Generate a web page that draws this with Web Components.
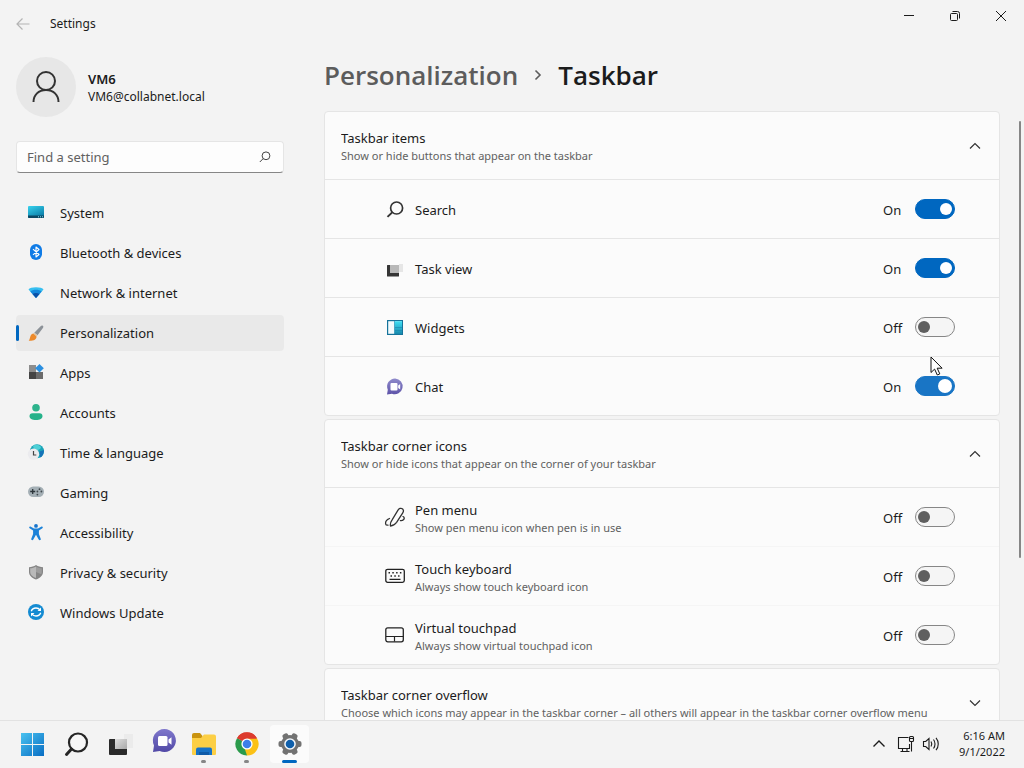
<!DOCTYPE html>
<html lang="en">
<head>
<meta charset="utf-8">
<title>Settings</title>
<style>
  html, body { height: 100%; }
  body {
    margin: 0;
    display: flex;
    flex-direction: column;
    overflow: hidden;
    background: #f3f3f3;
    color: #1b1b1b;
    font: 13px/20px "Noto Sans", "Open Sans", sans-serif;
    --accent: #0067c0;
    --muted: #616161;
    --line: #e5e5e5;
    --small: 11px;
    --medium: 12px;
  }
</style>
</head>
<body>

<settings-window caption="Settings">
  <user-card slot="side" name="VM6" mail="VM6@collabnet.local"></user-card>
  <search-box slot="side" hint="Find a setting"></search-box>
  <side-nav slot="side">
    <nav-item icon="system">System</nav-item>
    <nav-item icon="bluetooth">Bluetooth &amp; devices</nav-item>
    <nav-item icon="network">Network &amp; internet</nav-item>
    <nav-item icon="brush" active>Personalization</nav-item>
    <nav-item icon="apps">Apps</nav-item>
    <nav-item icon="account">Accounts</nav-item>
    <nav-item icon="clock">Time &amp; language</nav-item>
    <nav-item icon="gamepad">Gaming</nav-item>
    <nav-item icon="access">Accessibility</nav-item>
    <nav-item icon="shield">Privacy &amp; security</nav-item>
    <nav-item icon="update">Windows Update</nav-item>
  </side-nav>

  <page-title parent="Personalization" current="Taskbar"></page-title>
  <setting-group label="Taskbar items" describe="Show or hide buttons that appear on the taskbar" open>
    <setting-row icon="search" label="Search" on></setting-row>
    <setting-row icon="taskview" label="Task view" on></setting-row>
    <setting-row icon="widgets" label="Widgets"></setting-row>
    <setting-row icon="chat" label="Chat" on hot></setting-row>
  </setting-group>
  <setting-group label="Taskbar corner icons" describe="Show or hide icons that appear on the corner of your taskbar" open>
    <setting-row icon="pen" label="Pen menu" describe="Show pen menu icon when pen is in use"></setting-row>
    <setting-row icon="keyboard" label="Touch keyboard" describe="Always show touch keyboard icon" soft></setting-row>
    <setting-row icon="touchpad" label="Virtual touchpad" describe="Always show virtual touchpad icon" soft></setting-row>
  </setting-group>
  <setting-group label="Taskbar corner overflow" describe="Choose which icons may appear in the taskbar corner – all others will appear in the taskbar corner overflow menu"></setting-group>
</settings-window>

<task-bar time="6:16 AM" date="9/1/2022">
  <task-button icon="start" label="Start"></task-button>
  <task-button icon="bigsearch" label="Search"></task-button>
  <task-button icon="bigtask" label="Task view"></task-button>
  <task-button icon="bigchat" label="Chat"></task-button>
  <task-button icon="folder" label="File Explorer" running></task-button>
  <task-button icon="chrome" label="Chrome" running></task-button>
  <task-button icon="gear" label="Settings" running active></task-button>
</task-bar>

<mouse-pointer></mouse-pointer>

<script>
// [width, height, markup]
const ICONS = {
  back: [14, 14, '<path d="M13.500 7H1M6.500 1.500L1 7l5.500 5.500" fill="none" stroke="#b4b4b4" stroke-width="1.200"/>'],
  min: [12, 12, '<path d="M1 5.500h10" stroke="#1b1b1b"/>'],
  restore: [12, 12, '<rect x="1.500" y="3.500" width="7" height="7" rx="1" fill="none" stroke="#1b1b1b"/><path d="M3.500 1.500h5a2 2 0 0 1 2 2v5" fill="none" stroke="#1b1b1b"/>'],
  close: [12, 12, '<path d="M1 1l10 10M11 1L1 11" stroke="#1b1b1b" fill="none"/>'],
  user: [32, 34, '<g fill="none" stroke="#333" stroke-width="2"><circle cx="16" cy="11" r="9"/><path d="M3.500 32c0-7 5-12 12.500-12s12.500 5 12.500 12"/></g>'],
  find: [12, 12, '<g fill="none" stroke="#444"><circle cx="7" cy="4.800" r="3.900"/><path d="M4.200 7.600L.8 11"/></g>'],
  up: [12, 8, '<path d="M1 6.500L6 1.500l5 5" fill="none" stroke="#333" stroke-width="1.200"/>'],
  down: [12, 8, '<path d="M1 1.500l5 5 5-5" fill="none" stroke="#333" stroke-width="1.200"/>'],
  crumb: [8, 12, '<path d="M1.500 1.500L6 6l-4.500 4.500" fill="none" stroke="#5c5c5c" stroke-width="1.600"/>'],

  system: [16, 16, '<defs><linearGradient id="g" x2=".6" y2="1"><stop stop-color="#38d3ee"/><stop offset="1" stop-color="#0a7da8"/></linearGradient></defs><rect y="1" width="16" height="12" rx="1" fill="url(#g)"/><path d="M0 10.500h16V12a1 1 0 0 1-1 1H1a1 1 0 0 1-1-1z" fill="#0b4763"/><path d="M10 11.800h1M12 11.800h1M14 11.800h1" stroke="#7fe3f5"/>'],
  bluetooth: [16, 16, '<rect x="2" y="-1" width="12" height="16" rx="6" fill="#0f7be6"/><path d="M5 4.200l6 5.300L8 12V2l3 2.500-6 5.300" fill="none" stroke="#fff" stroke-width="1.100" stroke-linejoin="round"/>'],
  network: [16, 16, '<path d="M.5 4.500C2 1.500 14 1.500 15.500 4.500L8 13z" fill="#37bff0"/><path d="M2.300 6.500C5 4 11 4 13.700 6.500L8 13z" fill="#1488dc"/><path d="M4.500 9C6.500 7.500 9.500 7.500 11.500 9L8 13z" fill="#0b4fa6"/>'],
  brush: [16, 16, '<path d="M14.800.7c.8.500.7 1.300.1 2.200L9.500 10.300 6.300 7.700 12.600 1.200c.7-.7 1.500-.9 2.200-.5z" fill="#8c9298"/><path d="M6.300 7.700l3.200 2.600-1 1.200-3.300-2.700z" fill="#dfc6a4"/><path d="M5.200 8.600l3.300 2.800c.2 2.800-2.500 4.600-7.800 4.400C2.500 14.500 1.500 9.500 5.200 8.600z" fill="#ec8a2c"/>'],
  apps: [16, 16, '<path d="M1 0h7v7H1z" fill="#8d8d8d"/><path d="M1 7h7v7H1z" fill="#444"/><path d="M8 7h7v7H8z" fill="#6b6b6b"/><path d="M11.500-1L15.800 3.300 11.500 7.600 7.200 3.300z" fill="#2b8fe0"/>'],
  account: [16, 16, '<circle cx="8" cy="2.800" r="3.800" fill="#2db38c"/><path d="M1.500 11.200a3 3 0 0 1 3-3h7a3 3 0 0 1 3 3c0 2.200-2.500 3.800-6.500 3.800s-6.500-1.600-6.500-3.800z" fill="#25b28a"/>'],
  clock: [16, 16, '<circle cx="9" cy="6.200" r="7" fill="#1aa5b8"/><path d="M5 1C8-1.500 12 0 13 2c0 2-2 2-3 3s-3 1-4-1z" fill="#4fd0d6"/><path d="M11.500 6.500L16 5c0 3.500-1.500 6.500-4 7.500z" fill="#1673b8"/><circle cx="5.500" cy="9.300" r="5.700" fill="#ebebee"/><path d="M5.500 6v4h2.800" fill="none" stroke="#444" stroke-width="1.200"/>'],
  gamepad: [16, 16, '<rect y="1.500" width="16" height="10.500" rx="5.200" fill="#a4afb5"/><path d="M4.700 4v5M2.200 6.500h5" stroke="#2c3439" stroke-width="1.300"/><g fill="#3f484d"><circle cx="11.500" cy="4.200" r=".9"/><circle cx="9.400" cy="6.500" r=".9"/><circle cx="13.400" cy="6.500" r=".9"/><circle cx="9.400" cy="9.600" r=".9"/></g>'],
  access: [16, 16, '<circle cx="8" cy=".9" r="1.900" fill="#1674cc"/><path d="M2.400 1.600L6 3.500h4l3.600-1.900c1.200-.2 1.600 1 .8 1.600L10.900 5.400V9l1.900 5c.2 1.200-1.500 1.700-2.100.6L8 9.800l-2.700 4.800c-.6 1.100-2.300.6-2.100-.6L5.100 9V5.400L1.600 3.200c-.8-.6-.4-1.800.8-1.600z" fill="#1c82d8"/>'],
  shield: [16, 16, '<path d="M8 0C10 1.400 12.500 2.200 15 2.200V7c0 3.500-3 6-7 7.500C4 13 1 10.500 1 7V2.200C3.500 2.200 6 1.400 8 0z" fill="#858585"/><path d="M8 1.400c1.800 1.200 3.800 1.800 5.800 1.900V7c0 .8-.2 1.600-.6 2.300L8 7z" fill="#9c9c9c"/><path d="M8 1.400v11.700C4.500 11.800 2.200 9.700 2.200 7V3.300C4.300 3.200 6.200 2.600 8 1.400z" fill="#b9b9b9"/>'],
  update: [16, 16, '<circle cx="8" cy="7" r="8" fill="#148bd2"/><g fill="none" stroke="#fff" stroke-width="1.400"><path d="M3.300 6.200C4 4 5.800 3 8 3c1.800 0 3.200.8 4.200 2.200"/><path d="M12.700 7.800C12 10 10.200 11 8 11c-1.800 0-3.200-.8-4.200-2.200"/></g><path d="M13 2.500V6H9.500zM3 11.500V8h3.500z" fill="#fff"/>'],

  search: [20, 20, '<g fill="none" stroke="#333" stroke-width="1.700"><circle cx="11.600" cy="9" r="6"/><path d="M7.200 13.400L2.500 17.900" stroke-width="2"/></g>'],
  taskview: [20, 20, '<path d="M14 6h4v8h-4z" fill="#e6e6e6"/><rect x="2" y="7" width="12" height="11.500" rx=".5" fill="#353535"/><path d="M5 7h9v8H5z" fill="#b8b8b8"/>'],
  widgets: [20, 20, '<defs><linearGradient id="g" x2="0" y2="1"><stop stop-color="#3fe0f4"/><stop offset="1" stop-color="#1789ad"/></linearGradient></defs><rect x="2.600" y="3.600" width="14.800" height="13.800" fill="#f2fbfd" stroke="#15739b" stroke-width="1.200"/><path d="M9.500 4.200H17v12.700H9.500z" fill="url(#g)"/><path d="M9.500 4v13M10 10.500h7M10 13.500h7" stroke="#1985ad" stroke-width=".6"/>'],
  chat: [20, 20, '<defs><linearGradient id="g" x2="0" y2="1"><stop stop-color="#8f8bcb"/><stop offset="1" stop-color="#5d52a8"/></linearGradient></defs><path d="M10.200 2.500a7.900 7.900 0 1 1-3.200 15.300L2 18.500l.8-4.800A7.900 7.900 0 0 1 10.200 2.500z" fill="url(#g)"/><rect x="5.500" y="7" width="7" height="7.500" rx="1" fill="#fff"/><path d="M13.200 9.500l2-1.600v5.600l-2-1.600z" fill="#fff"/>'],
  pen: [20, 20, '<g fill="none" stroke="#333" stroke-width="1.300" stroke-linecap="round" stroke-linejoin="round"><path d="M5.500 19c-.5-2 .3-4.300 1.600-6.200L13 3.200C14 1.500 16 .8 17.300 1.700s1.400 2.700.3 4.400l-6 9.200c-1.500 2-3.500 3.500-6.100 3.700z"/><path d="M4.500 11.500C2 12.500.3 14.800.6 16.800c.2 1 1.200 1.500 2.400 1.400"/><path d="M18 9.500c1.500.8 1.700 2 .4 3.300-.8.800-1.800 1-3 .8"/></g>'],
  keyboard: [20, 20, '<rect x=".8" y="3.300" width="18.500" height="13" rx="1.800" fill="none" stroke="#222" stroke-width="1.300"/><path d="M3.500 6.700h13M5.500 10h9" stroke="#222" stroke-width="1.500" stroke-dasharray="1.500 2.300"/><path d="M4.500 13.300h11" stroke="#222" stroke-width="1.200"/>'],
  touchpad: [20, 20, '<rect x=".8" y="2.800" width="17.500" height="14" rx="2" fill="none" stroke="#222" stroke-width="1.300"/><path d="M1 11.500h17.500M9.500 11.500v5" fill="none" stroke="#222" stroke-width="1.200"/>'],

  start: [28, 28, '<defs><linearGradient id="g" gradientUnits="userSpaceOnUse" x1="2" y1="2" x2="25" y2="26"><stop stop-color="#4cc6f2"/><stop offset="1" stop-color="#0a6fc4"/></linearGradient></defs><path d="M3 3h11v11H3zM15 3h11v11H15zM3 15h11v11H3zM15 15h11v11H15z" fill="url(#g)"/>'],
  bigsearch: [28, 28, '<circle cx="17" cy="12.500" r="9" fill="#f7f7f7" stroke="#262626" stroke-width="2.200"/><path d="M10.500 19L5.500 24.500" stroke="#262626" stroke-width="3" stroke-linecap="round"/>'],
  bigtask: [28, 28, '<defs><linearGradient id="g" x2="1" y2="1"><stop stop-color="#dedede"/><stop offset="1" stop-color="#a9a9a9"/></linearGradient></defs><path d="M20 4h9v14h-9z" fill="#ebebeb"/><rect x="5" y="9" width="18" height="16" rx="1" fill="#2a2a2a"/><path d="M11 9h12v10H11z" fill="url(#g)"/>'],
  bigchat: [28, 28, '<defs><linearGradient id="g" x2="0" y2="1"><stop stop-color="#8078cc"/><stop offset="1" stop-color="#5149a6"/></linearGradient></defs><path d="M17.500-1a11.500 11.500 0 1 1-4.800 22L6 22l1-6.500A11.500 11.500 0 0 1 17.500-1z" fill="url(#g)"/><rect x="11" y="6" width="9.500" height="10" rx="1.500" fill="#fff"/><path d="M21.500 9.500l3-2.300v7.600l-3-2.300z" fill="#fff"/>'],
  folder: [28, 28, '<path d="M2 5a2 2 0 0 1 2-2h6l2.500 3v5H2z" fill="#c9930f"/><path d="M2 8h9l3-3.500h10a2 2 0 0 1 2 2V24a1 1 0 0 1-1 1H3a1 1 0 0 1-1-1z" fill="#fccf45"/><path d="M6 19.500a2 2 0 0 1 2-2h12a2 2 0 0 1 2 2V25H6z" fill="#1772c6"/><path d="M9 22h10v3H9z" fill="#0f5ba8"/>'],
  chrome: [28, 28, '<path d="M14 14L4 8.300A11.400 11.400 0 0 1 24 8.300z" fill="#dc3b2e"/><path d="M14 14L24 8.300A11.400 11.400 0 0 1 14 25.500z" fill="#fbc116"/><path d="M14 14v11.500A11.400 11.400 0 0 1 4 8.300z" fill="#2a9a4b"/><path d="M14 8.500h10.200l-4.500 8.500z" fill="#fbc116"/><path d="M3.900 8.500l5.300 9 4.800-3.500z" fill="#2a9a4b"/><path d="M14 14h5l-5 11.500-2-6z" fill="#fbc116"/><path d="M4 8.300l5 .2 10 0h5A11.400 11.400 0 0 0 4 8.300z" fill="#dc3b2e"/><circle cx="14" cy="14" r="5.600" fill="#fff"/><circle cx="14" cy="14" r="4.300" fill="#3d7ee8"/>'],
  gear: [28, 28, '<g fill="#727272"><circle cx="14" cy="14" r="9"/><rect x="11" y="2.500" width="6" height="23" rx="2" transform="rotate(30 14 14)"/><rect x="11" y="2.500" width="6" height="23" rx="2" transform="rotate(90 14 14)"/><rect x="11" y="2.500" width="6" height="23" rx="2" transform="rotate(150 14 14)"/></g><circle cx="14" cy="14" r="5.800" fill="#f5f8fb"/><circle cx="14" cy="14" r="4.300" fill="#0f5fab"/>'],
  trayup: [14, 10, '<path d="M1.500 7.500L7 2l5.500 5.500" fill="none" stroke="#1b1b1b" stroke-width="1.400"/>'],
  monitor: [16, 18, '<g fill="none" stroke="#1b1b1b" stroke-width="1.100"><path d="M10.500 2.500H.5v11h11V9M4.500 13.500v3M9 13.500v3M2.500 16.500h9"/><rect x="11.500" y="1.500" width="4" height="5" rx="1"/><path d="M11.500 3.500h4M13.500 6.500v10"/></g>'],
  speaker: [18, 16, '<g fill="none" stroke="#1b1b1b" stroke-width="1.100"><path d="M1.500 5.500h2.200l3.300-3v11l-3.300-3H1.500z"/><path d="M9 5.500c1 1.500 1 3.500 0 5M11.500 3.500c2 2.500 2 6.500 0 9M14 1.800c3 3.500 3 9 0 12.400"/></g>'],
  pointer: [14, 20, '<path d="M1 1v15.500l3.600-3.400L7.300 19l2.500-1.100-2.600-5.700h4.900z" fill="#fff" stroke="#111"/>']
};

const icon = name => {
  const [w, h, body] = ICONS[name];
  return `<svg width="${w}" height="${h}" viewBox="0 0 ${w} ${h}" overflow="visible" aria-hidden="true">${body}</svg>`;
};

// Shared base: every element renders getTemplate() into an open shadow root
class BaseElement extends HTMLElement {
  constructor() {
    super();
    this.attachShadow({ mode: 'open' });
  }

  connectedCallback() {
    const template = document.createElement('template');
    template.innerHTML = `
      <style>
        * { box-sizing: border-box; }
        svg { display: block; flex: none; }
        button { margin: 0; padding: 0; border: 0; background: none; color: inherit; font: inherit; }
        ${this.getStyle()}
      </style>
      ${this.getTemplate()}`;
    this.shadowRoot.replaceChildren(template.content.cloneNode(true));
  }

  attr(name) {
    return this.getAttribute(name) || '';
  }
}

class SettingsWindow extends BaseElement {
  getTemplate() {
    return `
      <header>
        <button class="back" aria-label="Back">${icon('back')}</button>
        <span class="caption">${this.attr('caption')}</span>
        <div class="controls">
          <button aria-label="Minimize">${icon('min')}</button>
          <button aria-label="Restore">${icon('restore')}</button>
          <button aria-label="Close">${icon('close')}</button>
        </div>
      </header>
      <div class="body">
        <aside><slot name="side"></slot></aside>
        <main><slot></slot></main>
        <div class="thumb"></div>
      </div>`;
  }

  getStyle() {
    return `
      :host { flex: 1; min-height: 0; display: flex; flex-direction: column; }
      header { display: flex; align-items: center; height: 48px; flex: none; padding-left: 16px; }
      .back { width: 34px; display: flex; }
      .caption { font-size: var(--medium); }
      .controls { margin-left: auto; align-self: flex-start; display: flex; }
      .controls button { width: 46px; height: 32px; display: grid; place-items: center; }
      .body { flex: 1; min-height: 0; display: flex; gap: 40px; padding: 0 24px 0 16px; position: relative; overflow: hidden; }
      aside { flex: 0 0 268px; padding-top: 9px; }
      main { flex: 1; min-width: 0; display: flex; flex-direction: column; gap: 3px; }
      .thumb { position: absolute; right: 3px; top: 73px; width: 2px; height: 65%; border-radius: 1px; background: #868686; }
    `;
  }
}

class UserCard extends BaseElement {
  getTemplate() {
    return `
      <div class="avatar">${icon('user')}</div>
      <div>
        <div class="name">${this.attr('name')}</div>
        <div class="mail">${this.attr('mail')}</div>
      </div>`;
  }

  getStyle() {
    return `
      :host { display: flex; align-items: center; gap: 12px; }
      .avatar { width: 60px; height: 60px; border-radius: 50%; background: #e7e7e7; display: grid; place-items: center; }
      .name { font-weight: 600; }
      .mail { font-size: var(--medium); line-height: 16px; }
    `;
  }
}

class SearchBox extends BaseElement {
  getTemplate() {
    return `
      <input type="text" id="q" placeholder="${this.attr('hint')}" aria-label="${this.attr('hint')}">
      <label for="q">${icon('find')}</label>`;
  }

  getStyle() {
    return `
      :host { display: flex; align-items: center; height: 32px; margin: 24px 0 22px; padding: 0 12px 0 10px;
        background: #fdfdfd; border: 1px solid var(--line); border-bottom-color: #868686; border-radius: 4px; box-sizing: border-box; }
      input { flex: 1; min-width: 0; border: 0; padding: 0; outline: 0; background: none; font: inherit; color: inherit; }
      input::placeholder { color: var(--muted); opacity: 1; }
    `;
  }
}

class SideNav extends BaseElement {
  getTemplate() {
    return `<nav><slot></slot></nav>`;
  }

  getStyle() {
    return `
      :host { display: block; }
      nav { display: flex; flex-direction: column; gap: 4px; }
    `;
  }
}

class NavItem extends BaseElement {
  getTemplate() {
    return `<a href="#">${icon(this.attr('icon'))}<slot></slot></a>`;
  }

  getStyle() {
    return `
      :host { display: block; }
      a { position: relative; display: flex; align-items: center; gap: 16px; height: 36px; padding-left: 12px;
        border-radius: 4px; color: inherit; text-decoration: none; }
      :host([active]) a { background: #e9e9e9; }
      :host([active]) a::before { content: ""; position: absolute; left: 0; top: 10px; width: 3px; height: 16px;
        border-radius: 2px; background: var(--accent); }
    `;
  }
}

class PageTitle extends BaseElement {
  getTemplate() {
    return `
      <h1><a href="#">${this.attr('parent')}</a>${icon('crumb')}<span>${this.attr('current')}</span></h1>`;
  }

  getStyle() {
    return `
      :host { display: block; }
      h1 { margin: 0; padding: 9px 0 15px; display: flex; align-items: center; gap: 16px;
        font: 600 26px/36px "Open Sans", "Noto Sans", sans-serif; }
      a { color: #5c5c5c; text-decoration: none; }
    `;
  }
}

class SettingGroup extends BaseElement {
  getTemplate() {
    const open = this.hasAttribute('open');
    return `
      <button aria-expanded="${open}">
        <span class="text">
          <span class="label">${this.attr('label')}</span>
          <span class="describe">${this.attr('describe')}</span>
        </span>
        ${icon(open ? 'up' : 'down')}
      </button>
      <slot></slot>`;
  }

  getStyle() {
    return `
      :host { display: block; flex: none; background: #fbfbfb; border: 1px solid var(--line); border-radius: 4px; overflow: hidden; }
      button { display: flex; align-items: center; gap: 14px; width: 100%; height: 67px; padding: 0 18px 0 16px; text-align: left; }
      .text { flex: 1; min-width: 0; }
      .label, .describe { display: block; white-space: nowrap; overflow: hidden; }
      .describe { font-size: var(--small); line-height: 16px; color: var(--muted); }
    `;
  }
}

class SettingRow extends BaseElement {
  getTemplate() {
    const on = this.hasAttribute('on');
    const describe = this.attr('describe');
    return `
      ${icon(this.attr('icon'))}
      <label for="sw">
        <span class="label">${this.attr('label')}</span>
        ${describe ? `<span class="describe">${describe}</span>` : ''}
      </label>
      <span class="state">${on ? 'On' : 'Off'}</span>
      <input type="checkbox" role="switch" id="sw" ${on ? 'checked' : ''}>`;
  }

  getStyle() {
    return `
      :host { display: flex; align-items: center; height: 59px; padding: 0 44px 0 60px; box-sizing: border-box; border-top: 1px solid var(--line); }
      :host([soft]) { border-top-color: #f5f5f5; }
      label { flex: 1; padding: 1px 0 0 10px; }
      .label, .describe { display: block; }
      .describe { font-size: var(--small); line-height: 16px; color: var(--muted); }
      .state { width: 32px; padding-top: 1px; }
      input { appearance: none; display: flex; align-items: center; width: 40px; height: 20px; margin: 0; padding: 0 2px;
        border: 1px solid #868686; border-radius: 10px; background: #f5f5f5; }
      input::before { content: ""; width: 12px; height: 12px; border-radius: 50%; background: #5f5f5f; }
      input:checked { justify-content: flex-end; border-color: var(--accent); background: var(--accent); }
      input:checked::before { background: #fff; }
      :host([hot]) input { border-color: #1975c5; background: #1975c5; }
      :host([hot]) input::before { width: 14px; height: 14px; }
    `;
  }
}

class TaskBar extends BaseElement {
  getTemplate() {
    return `
      <slot></slot>
      <div class="tray">
        <button aria-label="Show hidden icons">${icon('trayup')}</button>
        <button aria-label="Network and volume">${icon('monitor')}${icon('speaker')}</button>
        <button class="clock"><time>${this.attr('time')}</time><time>${this.attr('date')}</time></button>
      </div>`;
  }

  getStyle() {
    return `
      :host { display: flex; align-items: stretch; flex: none; height: 48px; padding: 0 19px 1px 10px; box-sizing: border-box;
        border-top: 1px solid #e2e2e2; background: #f3f3f3; }
      .tray { margin-left: auto; display: flex; gap: 12px; }
      .tray button { display: flex; align-items: center; gap: 8px; }
      .tray .clock { flex-direction: column; align-items: flex-end; justify-content: center; gap: 0;
        min-width: 53px; font-size: var(--small); line-height: 16px; }
    `;
  }
}

class TaskButton extends BaseElement {
  getTemplate() {
    return `<button aria-label="${this.attr('label')}">${icon(this.attr('icon'))}</button>`;
  }

  getStyle() {
    return `
      :host { display: flex; align-items: center; padding: 0 2px; }
      button { position: relative; display: grid; place-items: center; width: 39px; height: 38px; border-radius: 4px; }
      :host([active]) button { background: #fbfbfb; }
      :host([running]) button::after { content: ""; position: absolute; left: 17px; bottom: 0; width: 5px; height: 3px;
        border-radius: 2px; background: #868686; }
      :host([active]) button::after { left: 12px; width: 15px; background: var(--accent); }
    `;
  }
}

class MousePointer extends BaseElement {
  getTemplate() {
    return icon('pointer');
  }

  getStyle() {
    return `:host { position: fixed; left: 930px; top: 356px; pointer-events: none; }`;
  }
}

customElements.define('settings-window', SettingsWindow);
customElements.define('user-card', UserCard);
customElements.define('search-box', SearchBox);
customElements.define('side-nav', SideNav);
customElements.define('nav-item', NavItem);
customElements.define('page-title', PageTitle);
customElements.define('setting-group', SettingGroup);
customElements.define('setting-row', SettingRow);
customElements.define('task-bar', TaskBar);
customElements.define('task-button', TaskButton);
customElements.define('mouse-pointer', MousePointer);
</script>
</body>
</html>
